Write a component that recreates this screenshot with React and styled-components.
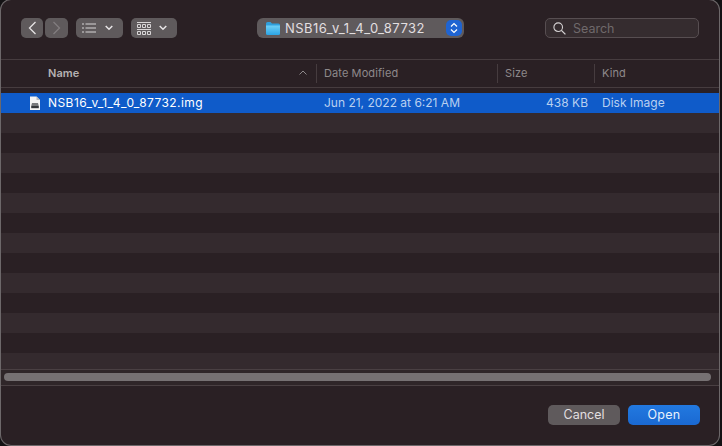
import styled, { createGlobalStyle } from "styled-components";

const GlobalStyle = createGlobalStyle`
  html, body {
    margin: 0;
    padding: 0;
    background: #141214;
  }
  body {
    font-family: "Inter", "Liberation Sans", sans-serif;
  }
`;

const rows = Array.from({ length: 13 }, (_, i) => i);
const COLUMNS = "316px 181px 97px 1fr";

export default function App() {
  return (
    <>
      <GlobalStyle />
      <Page>
        <Dialog>
          <Toolbar>
            <NavGroup>
              <ToolButton $w={22}>
                <svg width="9" height="14" viewBox="0 0 9 14">
                  <path d="M7.5 1 L1.5 7 L7.5 13" fill="none" stroke="#e6e3e4" strokeWidth="1.3" />
                </svg>
              </ToolButton>
              <ToolButton $w={23}>
                <svg width="9" height="14" viewBox="0 0 9 14">
                  <path d="M1.5 1 L7.5 7 L1.5 13" fill="none" stroke="#827d7f" strokeWidth="1.3" />
                </svg>
              </ToolButton>
            </NavGroup>
            <ToolButton $w={47} $gap={9} $pr={4}>
              <svg width="14" height="10" viewBox="0 0 14 10">
                <path
                  d="M0 1 H2 M3.5 1 H14 M0 5 H2 M3.5 5 H14 M0 9 H2 M3.5 9 H14"
                  stroke="#d8d5d6"
                  strokeWidth="1"
                />
              </svg>
              <Chevron />
            </ToolButton>
            <ToolButton $w={46} $gap={8} $pr={4}>
              <svg width="14" height="13" viewBox="0 0 14 13">
                <path d="M0 .5 H14 M0 7.5 H14" stroke="#d8d5d6" strokeWidth="1" />
                <path
                  d="M.5 2.5 H3.5 V5.5 H.5 Z M5.5 2.5 H8.5 V5.5 H5.5 Z M10.5 2.5 H13.5 V5.5 H10.5 Z M.5 9.5 H3.5 V12.5 H.5 Z M5.5 9.5 H8.5 V12.5 H5.5 Z M10.5 9.5 H13.5 V12.5 H10.5 Z"
                  fill="none"
                  stroke="#d8d5d6"
                  strokeWidth="1"
                />
              </svg>
              <Chevron />
            </ToolButton>
            <PathPopup>
              <svg width="14" height="13" viewBox="0 0 14 13">
                <defs>
                  <linearGradient id="folderBody" x1="0" y1="0" x2="0" y2="1">
                    <stop offset="0" stopColor="#6fd0f7" />
                    <stop offset="1" stopColor="#2ba4e4" />
                  </linearGradient>
                </defs>
                <path d="M0 1.5 Q0 0 1.5 0 H4.5 L6 1.5 H12.5 Q14 1.5 14 3 V5 H0 Z" fill="#2f9fdc" />
                <path d="M0 3.5 H14 V11.5 Q14 13 12.5 13 H1.5 Q0 13 0 11.5 Z" fill="url(#folderBody)" />
              </svg>
              <PathLabel>NSB16_v_1_4_0_87732</PathLabel>
              <Stepper>
                <svg width="8" height="12" viewBox="0 0 8 12">
                  <path d="M1 4.5 L4 1.5 L7 4.5 M1 7.5 L4 10.5 L7 7.5" fill="none" stroke="#fff" strokeWidth="1.2" />
                </svg>
              </Stepper>
            </PathPopup>
            <SearchField>
              <svg width="13" height="13" viewBox="0 0 13 13">
                <circle cx="5.2" cy="5.2" r="4.3" fill="none" stroke="#d5d2d3" strokeWidth="1.1" />
                <path d="M8.4 8.4 L12.4 12.4" stroke="#d5d2d3" strokeWidth="1.3" />
              </svg>
              <SearchHint>Search</SearchHint>
            </SearchField>
          </Toolbar>

          <HeaderRow>
            <HeaderCell $strong>
              Name
              <svg width="8" height="5" viewBox="0 0 8 5">
                <path d="M.5 4.5 L4 1 L7.5 4.5" fill="none" stroke="#8e898b" strokeWidth="1" />
              </svg>
            </HeaderCell>
            <HeaderCell>Date Modified</HeaderCell>
            <HeaderCell>Size</HeaderCell>
            <HeaderCell>Kind</HeaderCell>
          </HeaderRow>

          <FileList>
            <FileRow $selected>
              <NameCell>
                <svg width="10" height="14" viewBox="0 0 10 14">
                  <path d="M0 .5 H6.5 L10 4 V14 H0 Z" fill="#f4f4f4" />
                  <path d="M6.5 .5 V4 H10 Z" fill="#bdbdbd" />
                  <path d="M2 7 H8 L8.8 10 H1.2 Z" fill="#77797c" />
                  <rect x="1.2" y="10" width="7.6" height="2.2" fill="#34363a" />
                </svg>
                NSB16_v_1_4_0_87732.img
              </NameCell>
              <InfoCell>Jun 21, 2022 at 6:21 AM</InfoCell>
              <SizeCell>438 KB</SizeCell>
              <InfoCell>Disk Image</InfoCell>
            </FileRow>
            {rows.map((i) => (
              <FileRow key={i} $odd={i % 2 === 0} />
            ))}
          </FileList>

          <ScrollTrack>
            <ScrollThumb />
          </ScrollTrack>

          <Footer>
            <FooterButton>Cancel</FooterButton>
            <FooterButton $primary>Open</FooterButton>
          </Footer>
        </Dialog>
      </Page>
    </>
  );
}

function Chevron() {
  return (
    <svg width="8" height="6" viewBox="0 0 8 6">
      <path d="M.7 1 L4 4.3 L7.3 1" fill="none" stroke="#e6e3e4" strokeWidth="1.5" />
    </svg>
  );
}

const Page = styled.div`
  width: 722px;
  height: 446px;
  overflow: hidden;
  padding: 0 3px 1px 1px;
  box-sizing: border-box;
`;

const Dialog = styled.div`
  height: 100%;
  box-sizing: border-box;
  display: flex;
  flex-direction: column;
  background: #2a2024;
  border-radius: 10px;
  box-shadow: 0 0 0 1px #6d686a;
  overflow: hidden;
`;

const Toolbar = styled.div`
  height: 60px;
  flex: none;
  box-sizing: border-box;
  padding: 18px 19px 21px 20px;
  display: flex;
  align-items: stretch;
  gap: 8px;
  border-bottom: 1px solid #463c3f;
`;

const NavGroup = styled.div`
  display: flex;
  gap: 2px;
`;

const ToolButton = styled.div`
  width: ${(p) => p.$w}px;
  flex: none;
  box-sizing: border-box;
  padding-right: ${(p) => p.$pr || 0}px;
  display: flex;
  align-items: center;
  justify-content: center;
  gap: ${(p) => p.$gap || 0}px;
  background: #5f5a5c;
  border-radius: 5px;
`;

const PathPopup = styled.div`
  width: 207px;
  flex: none;
  margin-left: 72px;
  box-sizing: border-box;
  padding: 0 2px 0 9px;
  display: flex;
  align-items: center;
  gap: 5px;
  background: #5f5a5c;
  border-radius: 6px;
`;

const PathLabel = styled.span`
  flex: 1;
  font-size: 13px;
  letter-spacing: 0.47px;
  color: #e2dfe0;
  white-space: nowrap;
`;

const Stepper = styled.div`
  width: 16px;
  height: 16px;
  display: flex;
  align-items: center;
  justify-content: center;
  background: #1f64d2;
  border-radius: 5px;
`;

const SearchField = styled.div`
  width: 154px;
  flex: none;
  margin-left: 73px;
  box-sizing: border-box;
  padding: 0 7px;
  display: flex;
  align-items: center;
  gap: 7px;
  background: #352c2f;
  border: 1px solid #574e51;
  border-radius: 5px;
`;

const SearchHint = styled.span`
  font-size: 12.5px;
  color: #6f696b;
`;

const HeaderRow = styled.div`
  height: 28px;
  flex: none;
  box-sizing: border-box;
  display: grid;
  grid-template-columns: ${COLUMNS};
  border-bottom: 1px solid #463c3f;
`;

const HeaderCell = styled.div`
  margin: 4px 0;
  padding: ${(p) => (p.$strong ? "0 9px 2px 47px" : "0 0 2px 7px")};
  display: flex;
  align-items: center;
  justify-content: space-between;
  font-size: 11px;
  letter-spacing: 0.1px;
  font-weight: ${(p) => (p.$strong ? 600 : 400)};
  color: ${(p) => (p.$strong ? "#b5b1b2" : "#8e898b")};
  border-right: 1px solid #463c3f;
  &:last-child {
    border-right: none;
  }
`;

const FileList = styled.div`
  flex: none;
  height: 281px;
  padding-top: 5px;
  box-sizing: border-box;
  overflow: hidden;
`;

const FileRow = styled.div`
  height: 20px;
  box-sizing: border-box;
  padding-bottom: 2px;
  display: grid;
  grid-template-columns: ${COLUMNS};
  align-items: center;
  background: ${(p) => (p.$selected ? "#0f5bc9" : p.$odd ? "#342a2e" : "transparent")};
  color: #b9d0f0;
  font-size: 12px;
`;

const NameCell = styled.div`
  padding-left: 29px;
  display: flex;
  align-items: center;
  gap: 8px;
  color: #fff;
  font-size: 12px;
  letter-spacing: 0.43px;
  svg {
    margin-top: 2px;
  }
`;

const InfoCell = styled.div`
  padding-left: 7px;
  white-space: nowrap;
`;

const SizeCell = styled.div`
  padding-right: 7px;
  text-align: right;
`;

const ScrollTrack = styled.div`
  height: 17px;
  flex: none;
  box-sizing: border-box;
  padding: 3px 8px 3px 3px;
  background: #2f2629;
  border-top: 1px solid #4a4043;
  border-bottom: 1px solid #4a4043;
`;

const ScrollThumb = styled.div`
  height: 8px;
  background: #767173;
  border-radius: 4px;
`;

const Footer = styled.div`
  flex: 1;
  box-sizing: border-box;
  padding: 19px 19px 0 0;
  display: flex;
  justify-content: flex-end;
  gap: 8px;
`;

const FooterButton = styled.div`
  width: 72px;
  height: 20px;
  box-sizing: border-box;
  padding-bottom: 2px;
  display: flex;
  align-items: center;
  justify-content: center;
  font-size: 12.5px;
  letter-spacing: ${(p) => (p.$primary ? "0.3px" : "0")};
  color: ${(p) => (p.$primary ? "#e8f0fb" : "#e2dfe0")};
  background: ${(p) => (p.$primary ? "linear-gradient(#2279e0, #1a69d2)" : "#5f5a5c")};
  border-radius: 5px;
`;
